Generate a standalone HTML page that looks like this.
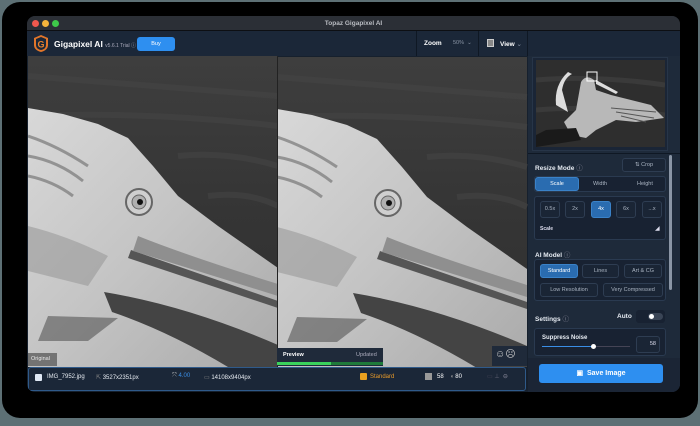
<!DOCTYPE html>
<html><head><meta charset="utf-8">
<style>
*{box-sizing:border-box;margin:0;padding:0}
body{width:700px;height:426px;background:#5d7075;font-family:"Liberation Sans",sans-serif;position:relative;overflow:hidden;color:#dfe5ee}
.shadow{position:absolute;left:2px;top:2px;width:696px;height:416px;background:#000;border-radius:18px}
.win{position:absolute;left:27px;top:16px;width:653px;height:376px;background:#16202d;border-radius:8px;overflow:hidden}
.abs{position:absolute}
.title{left:0;top:0;width:653px;height:15px;background:#2b2f36;border-bottom:1px solid #0d0f13;text-align:center;font-size:6.5px;line-height:15px;color:#b9bcc2;font-weight:bold}
.dot{top:4px;width:7px;height:7px;border-radius:50%}
.tool{left:0;top:15px;width:653px;height:25px;background:#1b2738}
.t{position:absolute;white-space:nowrap}
.btn{position:absolute;border:1px solid #2e3d52;border-radius:3px;font-size:5.5px;color:#aab4c2;text-align:center;background:#1a2535}
.blue{background:#2a6cb0;color:#fff;border-color:#3a82c8}
</style></head><body>
<div class="shadow"></div>
<div class="win">
 <div class="abs title">Topaz Gigapixel AI</div>
 <div class="abs dot" style="left:5px;background:#f0584e"></div>
 <div class="abs dot" style="left:15px;background:#f5b43c"></div>
 <div class="abs dot" style="left:25px;background:#3ec84a"></div>
 <div class="abs tool">
  <svg class="abs" style="left:5px;top:3px" width="18" height="19" viewBox="0 0 18 19"><path d="M9 1 L16 4 L16 11 Q16 16 9 18 Q2 16 2 11 L2 4Z" fill="#e2762a"/><path d="M9 3 L14 5 L14 11 Q14 15 9 16 Q4 15 4 11 L4 5Z" fill="#1b2738"/><text x="9" y="13.5" font-size="9" font-weight="bold" fill="#e8822f" text-anchor="middle" font-family="Liberation Sans">G</text></svg>
  <div class="t" style="left:27px;top:8px;font-size:8.5px;font-weight:bold;color:#fff">Gigapixel AI <span style="font-size:5px;font-weight:normal;color:#aab">v5.6.1 Trial ⓘ</span></div>
  <div class="t" style="left:110px;top:6px;width:38px;height:14px;background:#2e8ff0;border-radius:3px;font-size:5.5px;color:#fff;text-align:center;line-height:14px">Buy</div>
  <div class="abs" style="left:389px;top:0;width:1px;height:25px;background:#0f1824"></div>
  <div class="t" style="left:397px;top:9px;font-size:6.5px;font-weight:bold;color:#fff">Zoom</div>
  <div class="t" style="left:426px;top:9px;font-size:5.5px;color:#8a95a5">50% &nbsp;⌄</div>
  <div class="abs" style="left:451px;top:0;width:1px;height:25px;background:#0f1824"></div>
  <div class="abs" style="left:460px;top:8px;width:7px;height:8px;border:1px solid #ccc;background:#888"></div>
  <div class="t" style="left:473px;top:9px;font-size:6.5px;font-weight:bold;color:#fff">View <span style="color:#8a95a5;font-weight:normal">⌄</span></div>
  <div class="abs" style="left:500px;top:0;width:1px;height:25px;background:#0f1824"></div>
 </div>
 <svg class="abs" style="left:1px;top:40px" width="500" height="311" viewBox="0 0 500 311">
  <defs>
   <linearGradient id="bg" x1="0" y1="0" x2="0" y2="1"><stop offset="0" stop-color="#3e3e3e"/><stop offset="0.5" stop-color="#353535"/><stop offset="1" stop-color="#2e2e2e"/></linearGradient>
   <linearGradient id="fe" x1="0" y1="0" x2="1" y2="1"><stop offset="0" stop-color="#d8d8d8"/><stop offset="0.5" stop-color="#c4c4c4"/><stop offset="1" stop-color="#aaa"/></linearGradient>
   <g id="bird">
    <rect width="250" height="311" fill="url(#bg)"/>
    <path d="M0 20 Q120 30 250 40 M0 60 Q120 55 250 70 M150 100 Q200 95 250 110 M180 140 Q220 135 250 150" stroke="#444" stroke-width="6" fill="none" opacity=".6"/>
    <path d="M0 52 L35 58 L70 68 L100 82 L125 110 L150 140 L190 170 L250 212 L250 311 L0 311Z" fill="url(#fe)"/>
    <path d="M0 80 Q30 90 60 110 M0 100 Q30 105 55 125 M0 120 Q25 125 45 140" stroke="#777" stroke-width="3" fill="none" opacity=".7"/>
    <path d="M0 170 Q40 180 80 200 L60 230 L0 215Z" fill="#999" opacity=".6"/>
    <path d="M103 194 L250 245 L250 252 L100 202Z" fill="#555"/>
    <path d="M110 180 Q160 200 250 228 L250 240 Q170 215 105 195Z" fill="#8f8f8f"/>
    <path d="M76 236 Q160 250 250 289 L250 311 L200 311 Q140 275 84 256Z" fill="#444"/>
    <path d="M20 260 L90 262 L60 285 L10 285Z" fill="#555" opacity=".6"/>
    <circle cx="111" cy="146" r="13" fill="#cfcfcf" stroke="#666" stroke-width="2"/>
    <circle cx="111" cy="146" r="7" fill="#b0b0b0" stroke="#666"/>
    <circle cx="112" cy="146" r="3" fill="#111"/>
   </g>
  </defs>
  <use href="#bird" x="0" y="0"/>
  <use href="#bird" x="249" y="1"/>
  <rect x="249" y="0" width="1" height="311" fill="#222"/>
 </svg>
 <div class="t" style="left:1px;top:337px;width:29px;height:13px;background:#6b6b6b;font-size:5.5px;color:#eee;line-height:13px;padding-left:3px;opacity:.9">Original</div>
 <div class="abs" style="left:250px;top:332px;width:106px;height:18px;background:#1f2a3a"></div>
 <div class="t" style="left:256px;top:336px;font-size:5.5px;color:#fff;font-weight:bold">Preview</div>
 <div class="t" style="left:329px;top:336px;font-size:5.5px;color:#aab">Updated</div>
 <div class="abs" style="left:250px;top:346px;width:106px;height:3px;background:#1f7a3a"></div>
 <div class="abs" style="left:250px;top:346px;width:54px;height:3px;background:#3ad25c"></div>
 <div class="abs" style="left:465px;top:330px;width:35px;height:20px;background:#1f2a3a"></div>
 <div class="t" style="left:468px;top:333px;font-size:10px;color:#ccc">☺☹</div>
 <div class="abs" style="left:1px;top:351px;width:498px;height:24px;background:#1b2738;border:1px solid #2f5a8a;border-radius:3px"></div>
 <div class="abs" style="left:8px;top:358px;width:7px;height:7px;background:#dfe8f5;border-radius:1px"></div>
 <div class="t" style="left:20px;top:358px;font-size:6px;color:#e5eaf0">IMG_7952.jpg</div>
 <div class="t" style="left:69px;top:358px;font-size:6px;color:#e5eaf0"><span style="color:#888">⇱</span> 3527x2351px</div>
 <div class="t" style="left:145px;top:357px;font-size:6px;color:#3a8ee6"><span style="color:#ccc">⤧</span> 4.00</div>
 <div class="t" style="left:177px;top:358px;font-size:6px;color:#e5eaf0"><span style="color:#888">▭</span> 14108x9404px</div>
 <div class="abs" style="left:333px;top:357px;width:7px;height:7px;background:#e8a020;border-radius:1px"></div>
 <div class="t" style="left:343px;top:358px;font-size:6px;color:#e89a2a">Standard</div>
 <div class="abs" style="left:398px;top:357px;width:7px;height:7px;background:#999"></div>
 <div class="t" style="left:410px;top:358px;font-size:6px;color:#fff">58</div>
 <div class="t" style="left:423px;top:358px;font-size:6px;color:#fff"><span style="color:#999">◖</span> 80</div>
 <div class="t" style="left:460px;top:357px;font-size:6px;color:#445">▭ <span style="color:#667">⊥</span> &nbsp;<span style="color:#889">⊖</span></div>
 <div class="abs" style="left:501px;top:40px;width:152px;height:336px;background:#1e2a3a"></div>
 <div class="abs" style="left:505px;top:41px;width:136px;height:94px;background:#1a2536;border:1px solid #273548"></div>
 <svg class="abs" style="left:509px;top:44px" width="129" height="87" viewBox="0 0 129 87">
  <rect width="129" height="87" fill="#2e2e2e"/>
  <path d="M0 20 Q60 15 129 25 M0 50 Q60 45 129 55" stroke="#3a3a3a" stroke-width="5" fill="none"/>
  <path d="M32 12 Q18 25 20 45 L32 52 L26 30 Q28 18 36 14Z" fill="#ddd"/>
  <path d="M45 22 Q50 14 58 20 L60 30 L75 35 L115 45 L128 58 L100 62 L80 60 L60 70 L50 78 L35 75 L28 62 L40 50 Z" fill="#b8b8b8"/>
  <path d="M60 20 L82 32 L80 34 L60 24Z" fill="#ddd"/>
  <path d="M75 48 L120 52 M80 52 L118 58 M85 56 L110 62" stroke="#555" stroke-width="1"/>
  <path d="M10 70 L40 68 L45 80 L0 87 L0 75Z" fill="#1a1a1a"/>
  <rect x="51" y="12" width="10" height="9" fill="none" stroke="#fff" stroke-width="1"/>
 </svg>
 <div class="abs" style="left:501px;top:137px;width:152px;height:1px;background:#0f1824"></div>
 <div class="t" style="left:508px;top:146px;font-size:6.5px;font-weight:bold;color:#e6ebf2">Resize Mode <span style="color:#889;font-weight:normal">ⓘ</span></div>
 <div class="btn" style="left:595px;top:142px;width:44px;height:14px;line-height:12px">⇅ Crop</div>
 <div class="abs" style="left:507px;top:160px;width:132px;height:16px;background:#182232;border:1px solid #2a3a50;border-radius:3px"></div>
 <div class="btn blue" style="left:508px;top:161px;width:44px;height:14px;line-height:12px">Scale</div>
 <div class="t" style="left:566px;top:165px;font-size:5.5px;color:#aab4c2">Width</div>
 <div class="t" style="left:610px;top:165px;font-size:5.5px;color:#aab4c2">Height</div>
 <div class="abs" style="left:507px;top:180px;width:132px;height:44px;background:#182232;border:1px solid #2a3a50;border-radius:3px"></div>
 <div class="btn" style="left:513px;top:185px;width:20px;height:17px;line-height:15px">0.5x</div>
 <div class="btn" style="left:538px;top:185px;width:20px;height:17px;line-height:15px">2x</div>
 <div class="btn blue" style="left:564px;top:185px;width:20px;height:17px;line-height:15px">4x</div>
 <div class="btn" style="left:589px;top:185px;width:20px;height:17px;line-height:15px">6x</div>
 <div class="btn" style="left:615px;top:185px;width:20px;height:17px;line-height:15px">...x</div>
 <div class="t" style="left:513px;top:210px;font-size:5px;font-weight:bold;color:#dde">Scale</div>
 <div class="t" style="left:628px;top:209px;font-size:6px;color:#dde">◢</div>
 <div class="t" style="left:508px;top:233px;font-size:6.5px;font-weight:bold;color:#e6ebf2">AI Model <span style="color:#889;font-weight:normal">ⓘ</span></div>
 <div class="abs" style="left:507px;top:243px;width:132px;height:42px;background:#182232;border:1px solid #2a3a50;border-radius:3px"></div>
 <div class="btn blue" style="left:513px;top:248px;width:38px;height:14px;line-height:12px">Standard</div>
 <div class="btn" style="left:555px;top:248px;width:37px;height:14px;line-height:12px">Lines</div>
 <div class="btn" style="left:597px;top:248px;width:38px;height:14px;line-height:12px">Art &amp; CG</div>
 <div class="btn" style="left:513px;top:267px;width:58px;height:14px;line-height:12px">Low Resolution</div>
 <div class="btn" style="left:576px;top:267px;width:60px;height:14px;line-height:12px">Very Compressed</div>
 <div class="t" style="left:508px;top:297px;font-size:6.5px;font-weight:bold;color:#e6ebf2">Settings <span style="color:#889;font-weight:normal">ⓘ</span></div>
 <div class="t" style="left:590px;top:297px;font-size:6.5px;font-weight:bold;color:#e6ebf2">Auto</div>
 <div class="abs" style="left:609px;top:294px;width:29px;height:13px;background:#182232;border-radius:3px"></div>
 <div class="abs" style="left:621px;top:297px;width:15px;height:7px;background:#3a4556;border-radius:4px"></div>
 <div class="abs" style="left:622px;top:298px;width:5px;height:5px;background:#fff;border-radius:50%"></div>
 <div class="abs" style="left:507px;top:312px;width:132px;height:28px;background:#182232;border:1px solid #2a3a50;border-radius:3px"></div>
 <div class="t" style="left:515px;top:319px;font-size:6px;font-weight:bold;color:#e6ebf2">Suppress Noise</div>
 <div class="abs" style="left:515px;top:330px;width:88px;height:1px;background:#445"></div>
 <div class="abs" style="left:515px;top:330px;width:51px;height:1px;background:#3a8ee6"></div>
 <div class="abs" style="left:564px;top:328px;width:5px;height:5px;background:#fff;border-radius:50%"></div>
 <div class="btn" style="left:609px;top:320px;width:24px;height:17px;line-height:15px;text-align:right;padding-right:3px;color:#dde">58</div>
 <div class="abs" style="left:501px;top:342px;width:152px;height:34px;background:#1b2535"></div>
 <div class="t" style="left:512px;top:348px;width:124px;height:19px;background:#2e8ff0;border-radius:3px;font-size:7px;font-weight:bold;color:#fff;text-align:center;line-height:19px">▣ &nbsp;Save Image</div>
 <div class="abs" style="left:642px;top:139px;width:3px;height:135px;background:#8a95a5;border-radius:2px"></div>
</div>
</body></html>
